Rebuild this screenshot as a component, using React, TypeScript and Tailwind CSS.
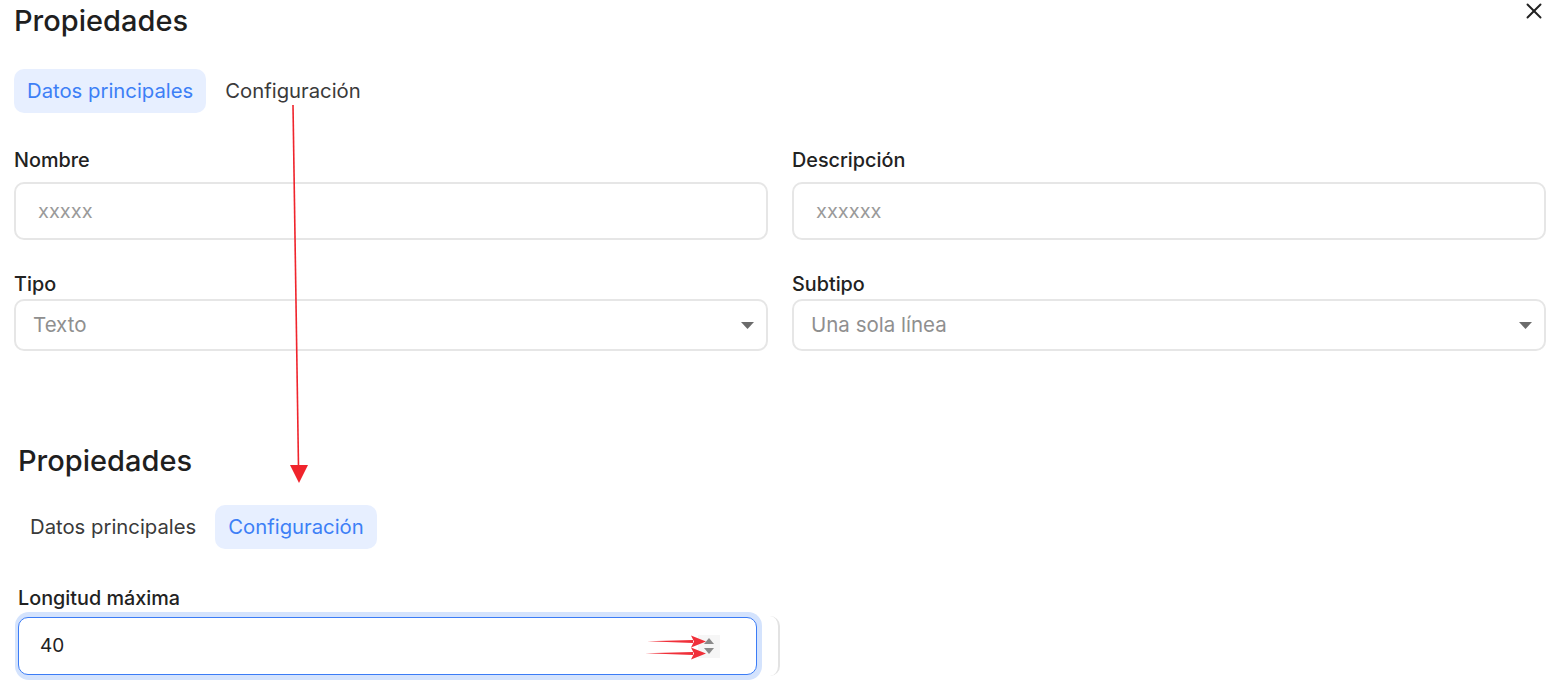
import { X } from 'lucide-react';

function Caret() {
    return (
        <svg width="13" height="7" viewBox="0 0 13 7" className="shrink-0">
            <path d="M0 0 H13 L6.5 7 Z" fill="#6b6b6b" />
        </svg>
    );
}

function Tabs({ active }: { active: number }) {
    const tabs = ['Datos principales', 'Configuración'];
    return (
        <div className="flex gap-[6px]">
            {tabs.map((t, i) => (
                <div
                    key={t}
                    className={`h-[44px] px-[13px] flex items-center rounded-[10px] text-[20.3px] ${i === active ? 'bg-[#e7efff] text-[#3d7ff6]' : 'text-[#3a3a3a]'}`}
                >
                    {t}
                </div>
            ))}
        </div>
    );
}

function TextField({ label, placeholder }: { label: string; placeholder: string }) {
    return (
        <div>
            <label className="block text-[19.8px] font-medium text-[#222] leading-[22px]">{label}</label>
            <div className="mt-[11px] h-[58px] border-2 border-[#e6e6e6] rounded-[10px] flex items-center pl-[22px] text-[20px] text-[#9a9a9a]">
                {placeholder}
            </div>
        </div>
    );
}

function SelectField({ label, value }: { label: string; value: string }) {
    return (
        <div>
            <label className="block text-[19.8px] font-medium text-[#222] leading-[22px]">{label}</label>
            <div className="mt-[4px] h-[52px] border-2 border-[#e6e6e6] rounded-[10px] flex items-center justify-between pl-[17px] pr-[12px] text-[20.5px] text-[#8f8f8f]">
                <span>{value}</span>
                <Caret />
            </div>
        </div>
    );
}

export default function App() {
    return (
        <div className="relative w-[1562px] h-[688px] bg-white overflow-hidden font-['Inter',sans-serif]">
            {/* first capture: Datos principales */}
            <section className="pl-[14px] pr-[16px]">
                <div className="flex items-start justify-between">
                    <h2 className="text-[29px] font-medium text-[#1f1f1f] leading-[36px] pt-[3px]">Propiedades</h2>
                    <X size={26} strokeWidth={1.8} className="text-[#222] -mt-[2px] -mr-[1px]" />
                </div>
                <div className="mt-[30px]">
                    <Tabs active={0} />
                </div>
                <div className="grid grid-cols-2 gap-x-6 gap-y-[33px] mt-[36px]">
                    <TextField label="Nombre" placeholder="xxxxx" />
                    <TextField label="Descripción" placeholder="xxxxxx" />
                    <SelectField label="Tipo" value="Texto" />
                    <SelectField label="Subtipo" value="Una sola línea" />
                </div>
            </section>

            {/* second capture: Configuración */}
            <section className="pl-[18px] mt-[92px]">
                <h2 className="text-[29px] font-medium text-[#1f1f1f] leading-[36px]">Propiedades</h2>
                <div className="mt-[26px] flex">
                    <div className="ml-[-1px]">
                        <Tabs active={1} />
                    </div>
                </div>
                <label className="block mt-[38px] text-[19.8px] font-medium text-[#222] leading-[22px]">Longitud máxima</label>
                <div className="flex items-center gap-[8px] mt-[3px]">
                    <div className="w-[747px] ml-[-3px] p-[5px] pl-[3px] rounded-[14px] bg-[#d4e3fd]">
                        <div className="h-[58px] bg-white border-[1.5px] border-[#3b7cf6] rounded-[10px] flex items-center justify-between pl-[21px] pr-[36px] text-[19px] text-[#222]">
                            <span>40</span>
                            <div className="w-[22px] h-[23px] bg-[#f6f6f6] flex flex-col items-center justify-center gap-[4px]">
                                <svg width="10" height="6" viewBox="0 0 10 6"><path d="M0 6 L5 0 L10 6 Z" fill="#8a8a8a" /></svg>
                                <svg width="10" height="6" viewBox="0 0 10 6"><path d="M0 0 H10 L5 6 Z" fill="#8a8a8a" /></svg>
                            </div>
                        </div>
                    </div>
                    <div className="w-[10px] h-[60px] border-r-2 border-[#e3e3e3] rounded-r-[12px]" />
                </div>
            </section>

            {/* red annotation arrows */}
            <svg className="absolute inset-0 pointer-events-none" width="1562" height="688">
                <line x1="293" y1="105" x2="298.5" y2="467" stroke="#f0242c" strokeWidth="1.6" />
                <path d="M290 465 L308 465 L299 483 Z" fill="#f0242c" />
                <path d="M647 641.3 L693 640 L693 643 Z" fill="#f0303a" />
                <path d="M691 635.5 L706 641.5 L691 647.5 L694 641.5 Z" fill="#f0303a" />
                <path d="M645 653.3 L693 652 L693 655 Z" fill="#f0303a" />
                <path d="M691 647.5 L706 653.5 L691 659.5 L694 653.5 Z" fill="#f0303a" />
            </svg>
        </div>
    );
}
